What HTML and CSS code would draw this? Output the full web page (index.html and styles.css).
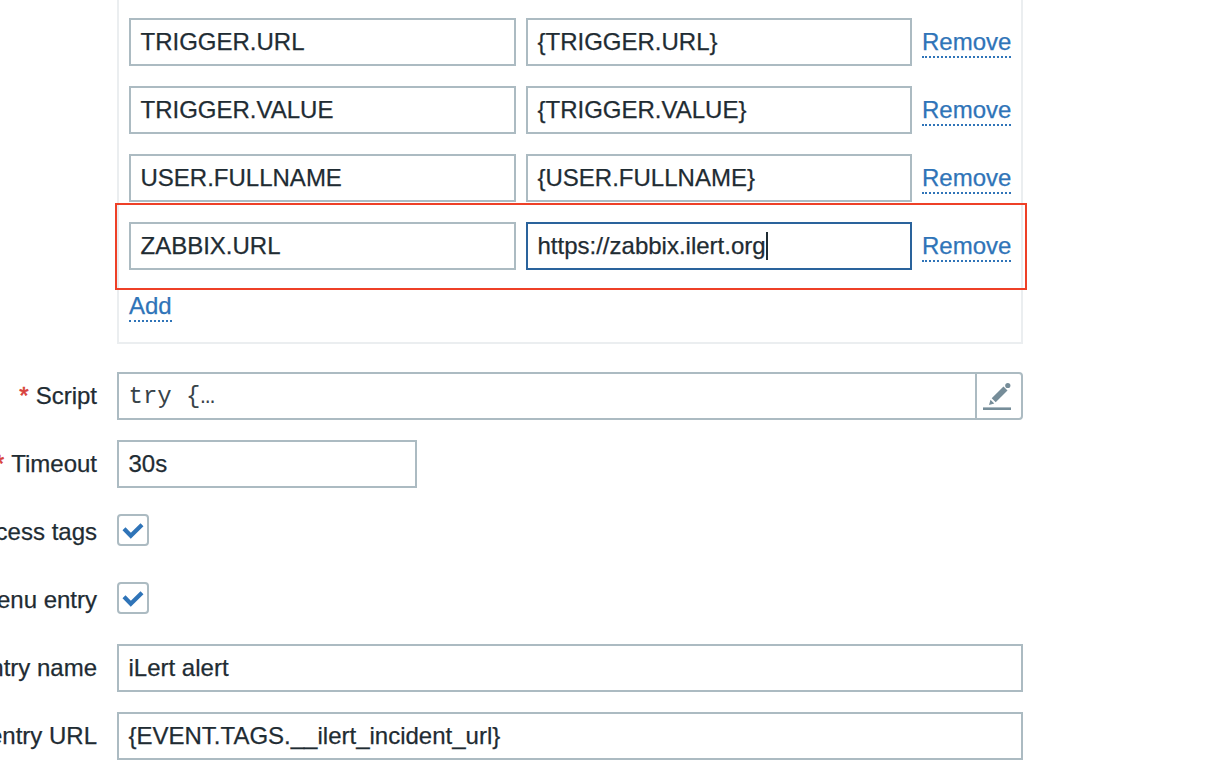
FILE: index.html
```html
<!DOCTYPE html>
<html lang="en">
<head>
<meta charset="utf-8">
<title>Media type</title>
<link rel="stylesheet" href="styles.css">
</head>
<body>
<main class="form">
  <section class="params">
    <div class="param"><div class="field">TRIGGER.URL</div><div class="field">{TRIGGER.URL}</div><a class="link">Remove</a></div>
    <div class="param"><div class="field">TRIGGER.VALUE</div><div class="field">{TRIGGER.VALUE}</div><a class="link">Remove</a></div>
    <div class="param"><div class="field">USER.FULLNAME</div><div class="field">{USER.FULLNAME}</div><a class="link">Remove</a></div>
    <div class="param"><div class="field">ZABBIX.URL</div><div class="field focused">https://zabbix.ilert.org<span class="caret"></span></div><a class="link">Remove</a><span class="highlight"></span></div>
    <div class="add"><a class="link">Add</a></div>
  </section>
  <div class="row">
    <div class="label"><span class="required">*</span>Script</div>
    <div class="field script"><span class="code">try {…</span>
      <span class="edit"><svg class="pencil" viewBox="0 0 44 44"><path d="M6 34.700h28" stroke="#768d99" stroke-width="2.600"/><path d="M12 31l1.500-5.300 3.800 3.800zM14.700 24.300l11.800-11.800 4 4L18.700 28.300z" fill="#768d99"/><circle cx="30.800" cy="11.500" r="2.600" fill="#768d99"/></svg></span>
    </div>
  </div>
  <div class="row">
    <div class="label"><span class="required">*</span>Timeout</div>
    <div class="field timeout">30s</div>
  </div>
  <div class="row">
    <div class="label">Process tags</div>
    <div class="checkbox"><svg class="check" viewBox="0 0 28 28"><path d="M5 12.800l6.800 6.900L23 8.800" fill="none" stroke="#2f74b8" stroke-width="4.200"/></svg></div>
  </div>
  <div class="row">
    <div class="label">Include event menu entry</div>
    <div class="checkbox"><svg class="check" viewBox="0 0 28 28"><path d="M5 12.800l6.800 6.900L23 8.800" fill="none" stroke="#2f74b8" stroke-width="4.200"/></svg></div>
  </div>
  <div class="row">
    <div class="label">Menu entry name</div>
    <div class="field">iLert alert</div>
  </div>
  <div class="row">
    <div class="label">Menu entry URL</div>
    <div class="field">{EVENT.TAGS.__ilert_incident_url}</div>
  </div>
</main>
</body>
</html>
```
FILE: styles.css
```css
* { box-sizing: border-box; }
body {
  margin: 0;
  height: 762px;
  overflow: hidden;
  background: #fff;
  color: #1f2c33;
  font: 24px/44px "Liberation Sans", Arial, sans-serif;
  -webkit-text-stroke: 0.25px;
}
.form {
  width: 1023px;
  display: flex;
  flex-direction: column;
  gap: 20px;
}
.params {
  margin: 0 0 8px 117px;
  height: 344px;
  padding: 18px 10px 0;
  border: 2px solid #ebeef0;
  border-top: 0;
  display: flex;
  flex-direction: column;
  gap: 20px;
}
.param {
  position: relative;
  display: grid;
  grid-template-columns: 387px 386px auto;
  column-gap: 10px;
  align-items: center;
  height: 48px;
}
.field {
  display: flex;
  flex: 1;
  height: 48px;
  padding: 0 9.5px;
  border: 2px solid #acbbc2;
  background: #fff;
  white-space: nowrap;
}
.focused { border-color: #2a639c; }
.caret {
  width: 2px;
  height: 28px;
  margin-top: 8px;
  background: #1f2c33;
}
.link {
  justify-self: start;
  height: 32px;
  border-bottom: 2px dotted #2f74b8;
  color: #2f74b8;
  line-height: 32px;
}
.highlight {
  position: absolute;
  inset: -19px -16px -20px -14px;
  border: 2px solid #ee4027;
}
.add { display: flex; }
.row {
  display: flex;
  align-items: center;
  gap: 20px;
  height: 48px;
}
.label {
  display: flex;
  flex: none;
  justify-content: flex-end;
  width: 97px;
  line-height: 48px;
  white-space: nowrap;
}
.required { margin-right: 7px; color: #d8413b; -webkit-text-stroke: 0.6px; }
.script { padding-right: 0; border-radius: 0 4px 4px 0; }
.code {
  flex: 1;
  font: 24px/46px "Liberation Mono", "Courier New", monospace;
  color: #384349;
  -webkit-text-stroke: 0;
}
.edit {
  width: 46px;
  border-left: 2px solid #acbbc2;
}
.pencil { display: block; width: 44px; height: 44px; }
.timeout { flex: none; width: 300px; }
.checkbox {
  width: 32px;
  height: 32px;
  margin-bottom: 4px;
  border: 2px solid #acbbc2;
  border-radius: 4px;
}
.check { display: block; width: 28px; height: 28px; }
```
